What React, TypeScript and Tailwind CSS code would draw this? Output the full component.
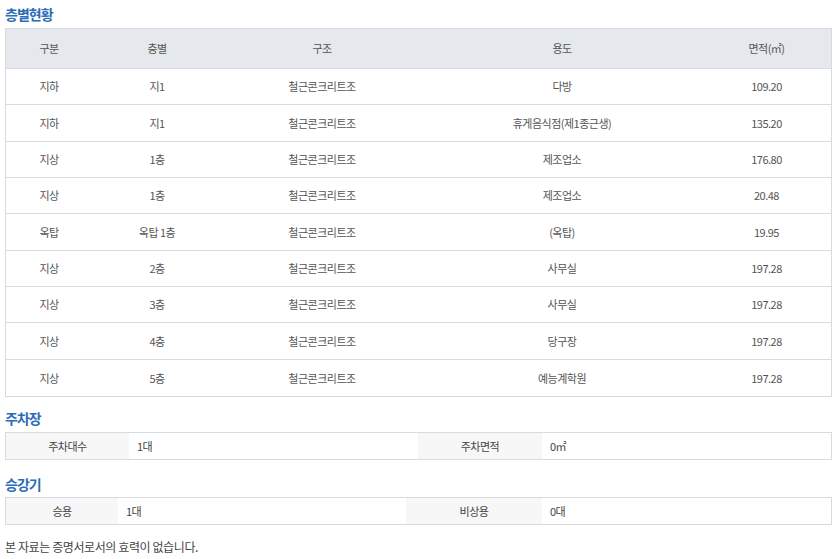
const font = { fontFamily: '"Noto Sans CJK KR", "Noto Sans", sans-serif' }

const floors = [
  ['지하', '지1', '철근콘크리트조', '다방', '109.20'],
  ['지하', '지1', '철근콘크리트조', '휴게음식점(제1종근생)', '135.20'],
  ['지상', '1층', '철근콘크리트조', '제조업소', '176.80'],
  ['지상', '1층', '철근콘크리트조', '제조업소', '20.48'],
  ['옥탑', '옥탑 1층', '철근콘크리트조', '(옥탑)', '19.95'],
  ['지상', '2층', '철근콘크리트조', '사무실', '197.28'],
  ['지상', '3층', '철근콘크리트조', '사무실', '197.28'],
  ['지상', '4층', '철근콘크리트조', '당구장', '197.28'],
  ['지상', '5층', '철근콘크리트조', '예능계학원', '197.28'],
]

const cols = 'grid grid-cols-[86px_130px_200px_280px_1fr]'

function Title({ children }: { children: React.ReactNode }) {
  return (
    <h3 className="text-[14px] font-bold leading-[20px] tracking-[-1px] text-[#2b6cb8]">
      {children}
    </h3>
  )
}

function InfoBox({ items, widths }: { items: [string, string][]; widths: string }) {
  return (
    <div
      className={`grid ${widths} h-[28px] border border-[#d6dae1] text-[11px] tracking-[-0.5px] text-[#444]`}
    >
      {items.map(([label, value]) => (
        <div key={label} className="contents">
          <div className="flex items-center justify-center bg-[#f7f7f8]">{label}</div>
          <div className="flex items-center pl-2">{value}</div>
        </div>
      ))}
    </div>
  )
}

export default function App() {
  return (
    <div className="w-[840px] h-[559px] bg-white px-[5px] pt-[4px]" style={font}>
      <Title>층별현황</Title>
      <div className="mt-[4px] w-[827px] border border-[#d6dae1] text-[11px] tracking-[-0.5px] text-[#555]">
        <div className={`${cols} h-[40px] bg-[#e5e8ec] border-b border-[#d6dae1]`}>
          {['구분', '층별', '구조', '용도', '면적(㎡)'].map((h) => (
            <div key={h} className="flex items-center justify-center">
              {h}
            </div>
          ))}
        </div>
        {floors.map((row, i) => (
          <div
            key={i}
            className={`${cols} h-[36.33px] ${i < floors.length - 1 ? 'border-b border-[#d6dae1]' : ''}`}
          >
            {row.map((c, j) => (
              <div key={j} className="flex items-center justify-center">
                {c}
              </div>
            ))}
          </div>
        ))}
      </div>

      <div className="mt-[11px]">
        <Title>주차장</Title>
      </div>
      <div className="mt-[4px] w-[827px]">
        <InfoBox
          widths="grid-cols-[123px_289px_124px_1fr]"
          items={[
            ['주차대수', '1대'],
            ['주차면적', '0㎡'],
          ]}
        />
      </div>

      <div className="mt-[14px]">
        <Title>승강기</Title>
      </div>
      <div className="mt-[3px] w-[827px]">
        <InfoBox
          widths="grid-cols-[112px_288px_136px_1fr]"
          items={[
            ['승용', '1대'],
            ['비상용', '0대'],
          ]}
        />
      </div>

      <p className="mt-[13px] text-[12px] tracking-[-0.4px] text-[#444]">
        본 자료는 증명서로서의 효력이 없습니다.
      </p>
    </div>
  )
}
